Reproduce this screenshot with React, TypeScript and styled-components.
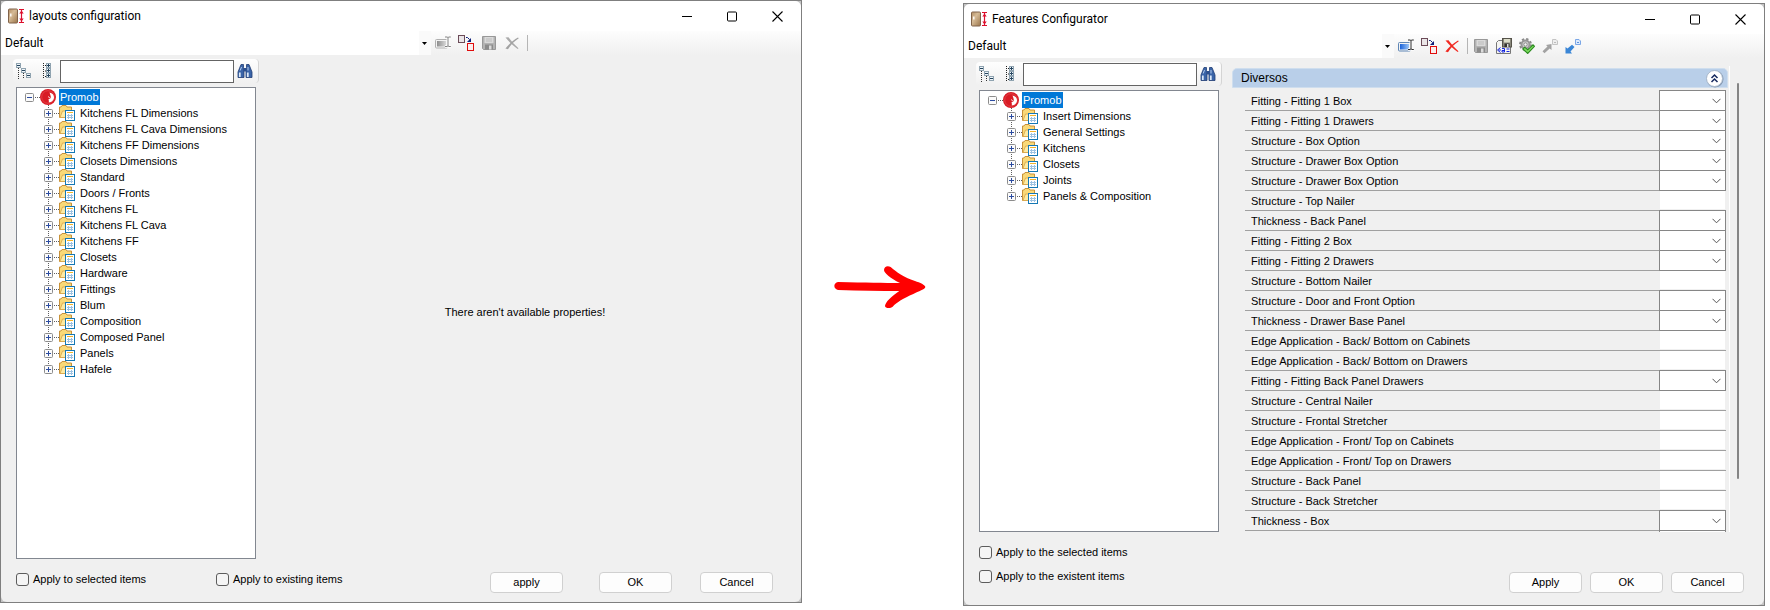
import React, { useId } from "react";
import styled, { createGlobalStyle } from "styled-components";

const uiFont = `"Liberation Sans", Arial, sans-serif`;
const titleFont = `Roboto, "Open Sans", sans-serif`;

const GlobalStyle = createGlobalStyle`
  *, *::before, *::after { box-sizing: border-box; }
  body {
    margin: 0;
    background: #fff;
    color: #000;
    font: 11px/16px ${uiFont};
  }
  button, input, select { font: inherit; color: inherit; margin: 0; }
`;

/* ---------- page ---------- */

const Page = styled.main`
  display: grid;
  grid-template-columns: 1fr 161px 1fr;
  align-items: start;
  padding-right: 5px;
`;

const Between = styled.div`
  align-self: center;
  display: flex;
  justify-content: center;
  padding: 0 6px 32px 0;
`;

const Window = styled.section<{ $top?: number }>`
  margin-top: ${(p) => p.$top ?? 0}px;
  border: 1px solid #7f7f7f;
  background: #c4c4c4;
  min-width: 0;
`;

const Frame = styled.div`
  border-radius: 6px;
  overflow: hidden;
  background: #f0f0f0;
`;

const TitleBar = styled.header`
  display: flex;
  align-items: center;
  height: 30px;
  padding: 0 18px 0 7px;
  background: #fff;
`;

const Title = styled.h1`
  flex: 1;
  margin: 0 0 0 4px;
  font: 400 12px/16px ${titleFont};
`;

const Captions = styled.div`
  display: flex;
  gap: 35px;
`;

const BareButton = styled.button`
  display: flex;
  align-items: center;
  justify-content: center;
  padding: 0;
  border: 0;
  background: none;
`;

const Toolbar = styled.div`
  display: flex;
  align-items: center;
  height: 24px;
  background: linear-gradient(#fdfdfd, #f0f0f0);
`;

const Profile = styled.div`
  flex: 0 1 430px;
  display: flex;
  align-items: center;
  height: 24px;
  background: linear-gradient(to left, #fafafa 12px, #fff 12px);
`;

const ProfileSelect = styled.select`
  flex: 1;
  height: 24px;
  padding: 0 0 0 4px;
  border: 0;
  outline: 0;
  appearance: none;
  background: none;
  font: 12px/16px ${titleFont};
`;

const Tools = styled.div`
  display: flex;
  align-items: center;
  gap: 7px;
  padding-left: 4px;
`;

const Divider = styled.span`
  width: 1px;
  height: 16px;
  margin-right: -2px;
  background: #b5b5b5;
`;

/* ---------- window body ---------- */

const Body = styled.div`
  display: flex;
  padding: 4px 5px 0 12px;
`;

const Side = styled.div`
  flex: 0 0 246px;
  display: flex;
  flex-direction: column;
  gap: 4px;
`;

const SearchBar = styled.div`
  display: flex;
  align-items: center;
  height: 24px;
  padding: 0 4px 0 3px;
  border-radius: 4px;
  background: linear-gradient(#fefefe, #f0f0f0);
  border-right: 1px solid #d4d4d4;
`;

const SearchInput = styled.input`
  width: 174px;
  height: 23px;
  margin: 0 3px 0 2px;
  padding: 0 4px;
  border: 1px solid #646464;
  background: #fff;
`;

const SearchTool = styled(BareButton)`
  width: 21px;
  height: 20px;
  justify-content: flex-start;
`;

const Tree = styled.ul<{ $height: number }>`
  list-style: none;
  width: 240px;
  min-height: ${(p) => p.$height}px;
  margin: 0 0 0 3px;
  padding: 1px 0 0 7px;
  border: 1px solid #828790;
  background: #fff;
`;

const Branch = styled.ul`
  list-style: none;
  margin: 0;
  padding: 0 0 0 16px;
`;

const Node = styled.div`
  display: flex;
  align-items: center;
  height: 16px;
  white-space: nowrap;
`;

const NodeLabel = styled.span<{ $selected?: boolean }>`
  margin-left: ${(p) => (p.$selected ? 3 : 4)}px;
  padding: 0 1px;
  color: ${(p) => (p.$selected ? "#fff" : "#000")};
  background: ${(p) => (p.$selected ? "#0078d7" : "none")};
`;

const EmptyPane = styled.p`
  flex: 1;
  display: flex;
  align-items: center;
  justify-content: center;
  margin: 6px 5px 0 0;
`;

const PropertyPane = styled.div`
  flex: 1;
  display: flex;
  min-width: 0;
  margin: 4px 20px 0 10px;
`;

const PropertyGroup = styled.div`
  flex: 1;
  min-width: 0;
  padding-top: 2px;
  border-right: 1px solid #fff;
`;

const GroupHeader = styled.div`
  display: flex;
  align-items: center;
  justify-content: space-between;
  height: 20px;
  margin-right: 1px;
  padding: 0 3px 0 8px;
  border: 1px solid #cfdeee;
  border-radius: 5px 5px 0 0;
  background: #b9cfe9;
  font-size: 12px;
`;

const Properties = styled.div`
  padding: 3px 3px 0 13px;
`;

const PropertyRow = styled.div`
  display: flex;
  height: 20px;
  border-bottom: 1px solid #a0a0a0;
`;

const PropertyLabel = styled.label`
  flex: 1;
  padding-left: 6px;
  line-height: 20px;
  white-space: nowrap;
`;

const Combo = styled.div`
  display: flex;
  align-items: center;
  width: 67px;
  height: 21px;
  margin-top: -1px;
  padding-right: 4px;
  border: 1px solid #868686;
  background: #fff;
`;

const ComboSelect = styled.select`
  flex: 1;
  min-width: 0;
  height: 19px;
  padding: 0 2px;
  border: 0;
  appearance: none;
  background: none;
`;

const ValueInput = styled.input`
  width: 65px;
  height: 18px;
  margin-right: 1px;
  padding: 0 3px;
  border: 0;
  background: #fff;
`;

const NextRow = styled.div`
  width: 67px;
  height: 1px;
  margin-left: auto;
  border: solid #868686;
  border-width: 0 1px;
  background: #fff;
`;

const ScrollTrack = styled.div`
  width: 9px;
  display: flex;
  justify-content: flex-end;
  padding: 17px 0 53px;
`;

const ScrollThumb = styled.div`
  width: 2px;
  border-radius: 1px;
  background: #858585;
`;

/* ---------- footer ---------- */

const Footer = styled.footer<{ $tall?: boolean }>`
  display: flex;
  justify-content: space-between;
  align-items: flex-end;
  padding: ${(p) => (p.$tall ? "14px 20px 12px 15px" : "13px 28px 9px 15px")};
`;

const Checks = styled.div<{ $column?: boolean }>`
  display: flex;
  flex-direction: ${(p) => (p.$column ? "column" : "row")};
  gap: ${(p) => (p.$column ? 11 : 0)}px;
  padding-bottom: ${(p) => (p.$column ? 10 : 7)}px;
`;

const Check = styled.label`
  display: flex;
  align-items: flex-start;
  gap: 4px;
  min-width: 200px;
  height: 13px;
  line-height: 12px;
  white-space: nowrap;
`;

const CheckInput = styled.input`
  width: 13px;
  height: 13px;
  appearance: none;
  border: 1px solid #5c5c5c;
  border-radius: 3px;
  background: #f5f5f5;
`;

const Buttons = styled.div`
  display: flex;
`;

const PushButton = styled.button<{ $gap?: number }>`
  width: 73px;
  height: 21px;
  margin-left: ${(p) => p.$gap ?? 0}px;
  padding: 0 0 2px;
  border: 1px solid #d0d0d0;
  border-radius: 4px;
  background: #fdfdfd;
  line-height: 16px;
`;

/* ---------- icons ---------- */

const Icon = ({ w = 16, h = 16, children }: { w?: number; h?: number; children?: React.ReactNode }) => (
  <svg width={w} height={h} viewBox={`0 0 ${w} ${h}`} fill="none" aria-hidden="true">
    {children}
  </svg>
);

const AppIcon = () => {
  const id = useId();
  return (
    <Icon w={17}>
      <defs>
        <linearGradient id={id} x1="0" y1="0" x2="1" y2="1">
          <stop offset="0" stopColor="#b48f66" />
          <stop offset="0.4" stopColor="#d6bb96" />
          <stop offset="1" stopColor="#9a744a" />
        </linearGradient>
      </defs>
      <rect x="0.5" y="1" width="9" height="14" rx="1" fill={`url(#${id})`} stroke="#80634a" />
      <path d="M2.800 5.500v3" stroke="#fff" strokeWidth="1.400" />
      <path d="M11 1.500h5M11 14.500h5M13.500 2v12" stroke="#dc0f2c" strokeWidth="1.200" />
      <path d="M11.300 5.500l2.200-3 2.200 3zM11.300 10.500l2.200 3 2.200-3z" fill="#dc0f2c" />
    </Icon>
  );
};

const MinimizeIcon = () => (
  <Icon w={10} h={11}><path d="M0 5.5h10" stroke="#000" /></Icon>
);
const MaximizeIcon = () => (
  <Icon w={10} h={11}><rect x="0.5" y="1" width="9" height="9" rx="1" stroke="#000" /></Icon>
);
const CloseIcon = () => (
  <Icon w={11} h={11}><path d="M0.500 0.500l10 10M10.500 0.500l-10 10" stroke="#000" strokeWidth="1.100" /></Icon>
);

const DropArrow = () => (
  <Icon w={12} h={6}><path d="M3 2h5l-2.500 3z" fill="#000" /></Icon>
);

const RenameIcon = ({ active }: { active?: boolean }) => {
  const id = useId();
  return (
    <Icon>
      <defs>
        <linearGradient id={id}>
          <stop offset="0" stopColor={active ? "#1c63d8" : "#8e8e8e"} />
          <stop offset="1" stopColor={active ? "#9cc6f8" : "#d8d8d8"} />
        </linearGradient>
      </defs>
      <rect x="0.500" y="4.500" width="12" height="8.500" rx="1" fill="#f3f3f3" stroke={active ? "#5f86b5" : "#b0b0b0"} />
      <rect x="2" y="6" width="9" height="5.500" fill={`url(#${id})`} />
      <path d="M10 2h2.200l.8 .7 .8-.7h2M10 11.500h2.200l.8-.7 .8 .7h2M13 2.500v8.500" stroke="#fff" strokeWidth="2.600" />
      <path d="M10 2h2.200l.8 .7 .8-.7h2M10 11.500h2.200l.8-.7 .8 .7h2M13 2.500v8.500" stroke={active ? "#2a2a2a" : "#808080"} />
    </Icon>
  );
};

const DuplicateIcon = () => (
  <Icon>
    <rect x="0.500" y="0.500" width="6" height="7" fill="#ebe6e8" stroke="#6b4b58" />
    <rect x="9.500" y="8.500" width="6" height="7" fill="#fbeeee" stroke="#e00c0c" />
    <path d="M8 2.500h1.500l2 2" stroke="#10207c" />
    <path d="M13 3v4h-4z" fill="#10207c" />
  </Icon>
);

const SaveIcon = () => (
  <Icon>
    <path d="M1.500 1.500h13v13h-12l-1-1z" fill="#b3b3b3" stroke="#989898" />
    <rect x="3.500" y="2" width="9" height="6" fill="#dadada" />
    <path d="M5 4h6M5 6h6" stroke="#bcbcbc" />
    <rect x="4" y="9.500" width="8" height="5" fill="#8b8b8b" />
    <rect x="8" y="10.500" width="2.500" height="4" fill="#dcdcdc" />
  </Icon>
);

const DeleteIcon = ({ active }: { active?: boolean }) => (
  <Icon>
    <path
      d="M1.500 2.500l3-.2c3 4 6.500 8 10 11l-.8 .7C10 11.500 5 7 1.500 2.500z"
      fill={active ? "#f22a22" : "#aaa"}
    />
    <path
      d="M14 2.500l.8 .8C10 6.500 6.500 10 4 14.200l-2.600-.7C5 9 9.500 5 14 2.500z"
      fill={active ? "#f02a22" : "#a2a2a2"}
    />
  </Icon>
);

const SaveAsIcon = () => (
  <Icon>
    <path d="M0.500 4.500l2-2h4v6h8v7h-14z" fill="#f4f4f2" stroke="#777" />
    <rect x="6.500" y="0.500" width="9" height="8.500" fill="#8a887c" stroke="#55534a" />
    <rect x="8" y="1" width="6" height="3.500" fill="#dcdcc8" />
    <rect x="8.500" y="5.500" width="5" height="3.500" fill="#33312c" />
    <rect x="11" y="6" width="1.500" height="3" fill="#ddd" />
    <path d="M4.500 9.500l-3 2.500 3 2.500M2.500 12h2.500M6 10.500h2.500v3.500h-2.500v-1.500h2M10.500 11h3M10.500 13.500h3" stroke="#1626e0" />
  </Icon>
);

const ApplyGearIcon = () => (
  <Icon>
    <circle cx="6.500" cy="6.500" r="5.500" stroke="#8a8a8a" strokeWidth="2" strokeDasharray="2.300 2.020" />
    <circle cx="6.500" cy="6.500" r="4" fill="#d2d2d2" stroke="#979797" strokeWidth="2" />
    <circle cx="6.500" cy="6.500" r="1.700" fill="#f5f5f5" stroke="#888" />
    <path d="M3.800 11l2-1.800 2.900 2.600 5.300-5 1.500 1.500-6.800 7.200z" fill="#7bdc5e" stroke="#2c8a20" strokeWidth="1.100" />
  </Icon>
);

const LinkArrowIcon = ({ active }: { active?: boolean }) => (
  <Icon>
    <path d="M10.500 1.500h3.500l1.500 1.500v3.500h-5z" fill={active ? "#dceafd" : "#eee"} stroke={active ? "#7ba7e6" : "#c4c4c4"} />
    <path d="M12 4.500h2" stroke={active ? "#5e92de" : "#bbb"} />
    {active ? (
      <path d="M0.500 9l2 1.500 4.500-3.700 2.500 2.200-4 4.500 1.500 2h-6.500z" fill="#3a86d6" />
    ) : (
      <path d="M9.500 6v6l-1.800-1.500-5.200 4.700-2-2 5-4.700-1.500-1.500z" fill="#a2a2a2" />
    )}
  </Icon>
);

const TinyBox = ({ x, y, plus }: { x: number; y: number; plus?: boolean }) => (
  <>
    <rect x={x + 0.5} y={y + 0.5} width="4" height="4" fill="#eef4f8" stroke="#8fa3b0" />
    <path d={plus ? `M${x + 1} ${y + 2.5}h3M${x + 2.5} ${y + 1}v3` : `M${x + 1} ${y + 2.5}h3`} stroke="#24445e" />
  </>
);

const CollapseTreeIcon = () => (
  <Icon>
    <path d="M2.500 5v11M7.500 10v6" stroke="#333" strokeDasharray="1 1" />
    <TinyBox x={0} y={0} />
    <TinyBox x={5} y={5} />
    <TinyBox x={10} y={10} />
  </Icon>
);

const ExpandTreeIcon = () => (
  <Icon>
    <path d="M6.500 0v16M8 2.500h2M8 8h2M8 13.500h2" stroke="#222" strokeDasharray="1 1" />
    <TinyBox x={9} y={0} plus />
    <TinyBox x={9} y={5} plus />
    <TinyBox x={9} y={10} plus />
  </Icon>
);

const BinocularsIcon = () => (
  <Icon>
    <path d="M4 1.500h2.500v3l.5 4v6h-6v-5.500zM12 1.500h-2.500v3l-.5 4v6h6v-5.500z" fill="#3a64a8" stroke="#1f3c74" strokeWidth="0.800" />
    <rect x="6.500" y="5" width="3" height="3.500" fill="#2c4f8e" />
    <path d="M2.800 9.500v4.500M10.800 9.500v4.500" stroke="#dbe8f8" strokeWidth="1.800" />
    <path d="M4.500 4l-1.300 3.500M11 4v3.500" stroke="#b3cbec" />
  </Icon>
);

const PromobIcon = () => (
  <Icon>
    <circle cx="8" cy="8" r="8" fill="#d81b24" />
    <circle cx="8" cy="8" r="6.300" stroke="#e8565c" strokeWidth="0.600" />
    <path d="M9.500 3.500c3 .5 4.500 2.500 4.500 4.800 0 2.800-2 5-5.200 5.200 .2-1.500-.1-2.500-.3-3.500 2 0 2.500-1.300 2.200-2.700-.2-1.200-.7-2.500-1.200-3.800z" fill="#fff" />
    <path d="M8.500 7.500l1 1.500" stroke="#fff" />
  </Icon>
);

const FolderIcon = () => (
  <Icon>
    <path d="M0.500 12.500v-10.500h1.500l1-1.500h4l1 1.500h4.500v10.500z" fill="#f9d978" stroke="#c8923a" />
    <path d="M1 12.500l2.500-6.500h9.500v6.500z" fill="#fdeaa2" stroke="#d8a548" strokeWidth="0.800" />
    <rect x="6.500" y="5.500" width="9" height="10" fill="#fff" stroke="#1478b4" />
    <path d="M8 7.500h6" stroke="#f2b42c" />
    <path d="M8 10.500h6M8 12.500h6M9.500 9v5M12.500 9v5" stroke="#9cc2e2" />
  </Icon>
);

const RootExpander = () => (
  <Icon>
    <path d="M11 8.500h5" stroke="#606060" strokeDasharray="1 1" />
    <rect x="1.500" y="4.500" width="8" height="8" rx="1" fill="#fbfbfb" stroke="#8c8c8c" />
    <path d="M3 8.500h5" stroke="#2b4ba0" />
  </Icon>
);

const ChildExpander = ({ last }: { last?: boolean }) => (
  <Icon w={19}>
    <path d={last ? "M8.500 0v4M14 8.500h5" : "M8.500 0v16M14 8.500h5"} stroke="#606060" strokeDasharray="1 1" />
    <rect x="4.500" y="4.500" width="8" height="8" rx="1" fill="#fbfbfb" stroke="#8c8c8c" />
    <path d="M6 8.500h5M8.500 6v5" stroke="#2b4ba0" />
  </Icon>
);

const GroupToggleIcon = () => (
  <Icon w={19} h={19}>
    <circle cx="10" cy="10" r="8.500" fill="#7f93ac" />
    <circle cx="9.500" cy="9.500" r="8" fill="#fff" stroke="#a9b9cc" />
    <path d="M6.500 9l3-3 3 3M6.500 13l3-3 3 3" stroke="#16295e" strokeWidth="1.500" />
  </Icon>
);

const ComboArrow = () => (
  <Icon w={9} h={6}><path d="M0.500 0.800l4 4 4-4" stroke="#555" /></Icon>
);

const RedArrow = () => (
  <svg width="93" height="44" viewBox="99 135 279 132" aria-hidden="true">
    <path
      d="M114 186C200 188 250 189 300 189C270 175 252 158 252 150C252 138 264 136 272 141C290 156 310 172 345 183C360 188 376 195 376 201C376 208 355 214 340 222C310 235 290 247 278 260C272 266 256 266 255 258C256 246 275 228 298 213C240 213 180 212 114 210C99 206 100 189 114 186Z"
      fill="#f00"
    />
  </svg>
);

/* ---------- shared parts ---------- */

const Caption = ({ title }: { title: string }) => (
  <TitleBar>
    <AppIcon />
    <Title>{title}</Title>
    <Captions>
      <BareButton aria-label="Minimize"><MinimizeIcon /></BareButton>
      <BareButton aria-label="Maximize"><MaximizeIcon /></BareButton>
      <BareButton aria-label="Close"><CloseIcon /></BareButton>
    </Captions>
  </TitleBar>
);

type Tool = { label: string; icon: React.ReactNode } | "divider";

const MainToolbar = ({ tools }: { tools: Tool[] }) => (
  <Toolbar>
    <Profile>
      <ProfileSelect aria-label="Profile"><option>Default</option></ProfileSelect>
      <DropArrow />
    </Profile>
    <Tools>
      {tools.map((t, i) =>
        t === "divider" ? <Divider key={i} /> : (
          <BareButton key={i} aria-label={t.label}>{t.icon}</BareButton>
        )
      )}
    </Tools>
  </Toolbar>
);

const ItemTree = ({ items, height }: { items: string[]; height: number }) => (
  <Side>
    <SearchBar>
      <SearchTool aria-label="Collapse all"><CollapseTreeIcon /></SearchTool>
      <SearchTool aria-label="Expand all"><ExpandTreeIcon /></SearchTool>
      <SearchInput type="text" aria-label="Search" />
      <BareButton aria-label="Find"><BinocularsIcon /></BareButton>
    </SearchBar>
    <Tree $height={height}>
      <li>
        <Node>
          <BareButton aria-label="Collapse Promob"><RootExpander /></BareButton>
          <PromobIcon />
          <NodeLabel $selected>Promob</NodeLabel>
        </Node>
        <Branch>
          {items.map((name, i) => (
            <li key={name}>
              <Node>
                <BareButton aria-label={`Expand ${name}`}>
                  <ChildExpander last={i === items.length - 1} />
                </BareButton>
                <FolderIcon />
                <NodeLabel>{name}</NodeLabel>
              </Node>
            </li>
          ))}
        </Branch>
      </li>
    </Tree>
  </Side>
);

const CheckOption = ({ children }: { children: string }) => (
  <Check><CheckInput type="checkbox" />{children}</Check>
);

const Property = ({ name, combo }: { name: string; combo: boolean }) => {
  const id = useId();
  return (
    <PropertyRow>
      <PropertyLabel htmlFor={id}>{name}</PropertyLabel>
      {combo ? (
        <Combo>
          <ComboSelect id={id}><option></option></ComboSelect>
          <ComboArrow />
        </Combo>
      ) : (
        <ValueInput id={id} type="text" />
      )}
    </PropertyRow>
  );
};

/* ---------- data ---------- */

const layoutItems = [
  "Kitchens FL Dimensions", "Kitchens FL Cava Dimensions", "Kitchens FF Dimensions",
  "Closets Dimensions", "Standard", "Doors / Fronts", "Kitchens FL", "Kitchens FL Cava",
  "Kitchens FF", "Closets", "Hardware", "Fittings", "Blum", "Composition",
  "Composed Panel", "Panels", "Hafele",
];

const featureItems = [
  "Insert Dimensions", "General Settings", "Kitchens", "Closets", "Joints", "Panels & Composition",
];

const properties: [string, boolean][] = [
  ["Fitting - Fitting 1 Box", true],
  ["Fitting - Fitting 1 Drawers", true],
  ["Structure - Box Option", true],
  ["Structure - Drawer Box Option", true],
  ["Structure - Drawer Box Option", true],
  ["Structure - Top Nailer", false],
  ["Thickness - Back Panel", true],
  ["Fitting - Fitting 2 Box", true],
  ["Fitting - Fitting 2 Drawers", true],
  ["Structure - Bottom Nailer", false],
  ["Structure - Door and Front Option", true],
  ["Thickness - Drawer Base Panel", true],
  ["Edge Application - Back/ Bottom on Cabinets", false],
  ["Edge Application - Back/ Bottom on Drawers", false],
  ["Fitting - Fitting Back Panel Drawers", true],
  ["Structure - Central Nailer", false],
  ["Structure - Frontal Stretcher", false],
  ["Edge Application - Front/ Top on Cabinets", false],
  ["Edge Application - Front/ Top on Drawers", false],
  ["Structure - Back Panel", false],
  ["Structure - Back Stretcher", false],
  ["Thickness - Box", true],
];

const layoutTools: Tool[] = [
  { label: "Rename", icon: <RenameIcon /> },
  { label: "Duplicate", icon: <DuplicateIcon /> },
  { label: "Save", icon: <SaveIcon /> },
  { label: "Delete", icon: <DeleteIcon /> },
  "divider",
];

const featureTools: Tool[] = [
  { label: "Rename", icon: <RenameIcon active /> },
  { label: "Duplicate", icon: <DuplicateIcon /> },
  { label: "Delete", icon: <DeleteIcon active /> },
  "divider",
  { label: "Save", icon: <SaveIcon /> },
  { label: "Save as", icon: <SaveAsIcon /> },
  { label: "Apply settings", icon: <ApplyGearIcon /> },
  { label: "Export", icon: <LinkArrowIcon /> },
  { label: "Import", icon: <LinkArrowIcon active /> },
];

export default function App() {
  return (
    <>
      <GlobalStyle />
      <Page>
        <Window>
          <Frame>
            <Caption title="layouts configuration" />
            <MainToolbar tools={layoutTools} />
            <Body>
              <ItemTree items={layoutItems} height={472} />
              <EmptyPane>There aren't available properties!</EmptyPane>
            </Body>
            <Footer>
              <Checks>
                <CheckOption>Apply to selected items</CheckOption>
                <CheckOption>Apply to existing items</CheckOption>
              </Checks>
              <Buttons>
                <PushButton>apply</PushButton>
                <PushButton $gap={36}>OK</PushButton>
                <PushButton $gap={28}>Cancel</PushButton>
              </Buttons>
            </Footer>
          </Frame>
        </Window>

        <Between><RedArrow /></Between>

        <Window $top={3}>
          <Frame>
            <Caption title="Features Configurator" />
            <MainToolbar tools={featureTools} />
            <Body>
              <ItemTree items={featureItems} height={442} />
              <PropertyPane>
                <PropertyGroup>
                  <GroupHeader>
                    Diversos
                    <BareButton aria-label="Collapse Diversos"><GroupToggleIcon /></BareButton>
                  </GroupHeader>
                  <Properties>
                    {properties.map(([name, combo], i) => (
                      <Property key={i} name={name} combo={combo} />
                    ))}
                    <NextRow />
                  </Properties>
                </PropertyGroup>
                <ScrollTrack><ScrollThumb /></ScrollTrack>
              </PropertyPane>
            </Body>
            <Footer $tall>
              <Checks $column>
                <CheckOption>Apply to the selected items</CheckOption>
                <CheckOption>Apply to the existent items</CheckOption>
              </Checks>
              <Buttons>
                <PushButton>Apply</PushButton>
                <PushButton $gap={8}>OK</PushButton>
                <PushButton $gap={8}>Cancel</PushButton>
              </Buttons>
            </Footer>
          </Frame>
        </Window>
      </Page>
    </>
  );
}
